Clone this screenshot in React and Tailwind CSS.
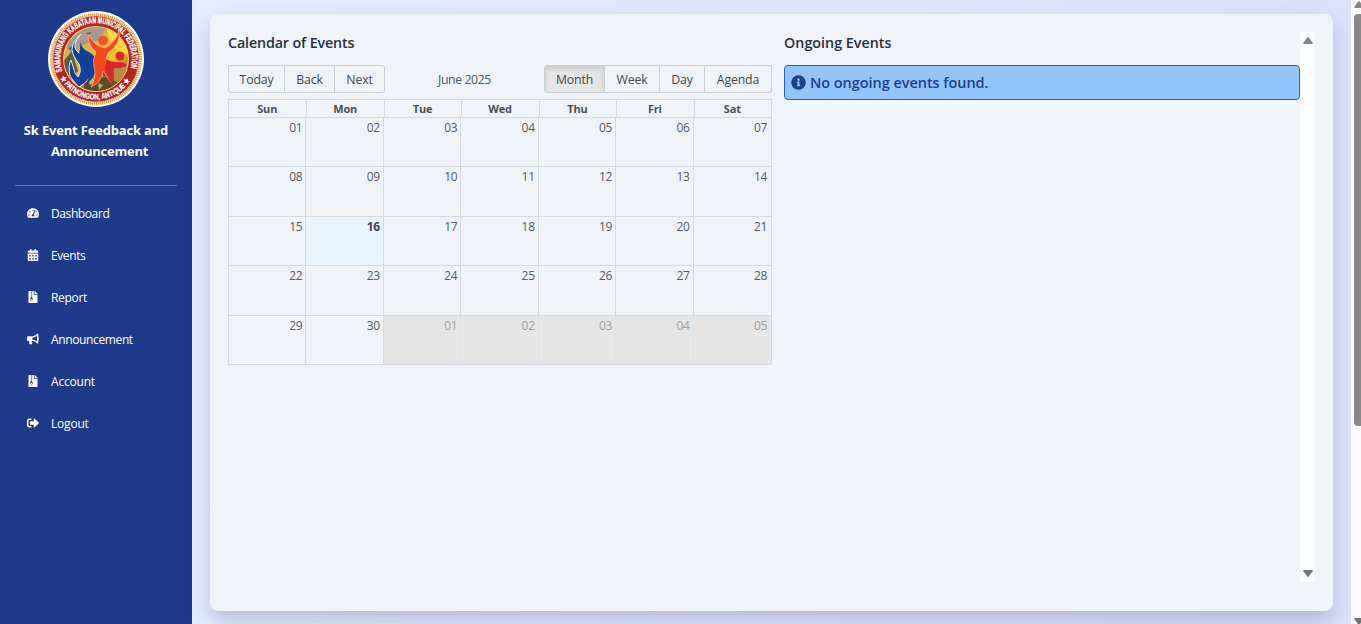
import React from "react";
import { FaTachometerAlt, FaFileArchive, FaBullhorn, FaSignOutAlt, FaInfoCircle } from "react-icons/fa";
import { FaCalendarDays } from "react-icons/fa6";

const nav = [
  { label: "Dashboard", Icon: FaTachometerAlt, track: "tracking-[-0.4px]" },
  { label: "Events", Icon: FaCalendarDays, track: "tracking-[-0.4px]" },
  { label: "Report", Icon: FaFileArchive, track: "tracking-[-0.3px]" },
  { label: "Announcement", Icon: FaBullhorn, track: "tracking-[-0.37px]" },
  { label: "Account", Icon: FaFileArchive, track: "tracking-[-0.2px]" },
  { label: "Logout", Icon: FaSignOutAlt, track: "tracking-[-0.2px]" },
];

const days = ["Sun", "Mon", "Tue", "Wed", "Thu", "Fri", "Sat"];
const pad = (n) => String(n).padStart(2, "0");
const weeks = [0, 1, 2, 3, 4].map((w) =>
  days.map((_, d) => {
    const n = w * 7 + d + 1;
    return { n: n > 30 ? n - 30 : n, off: n > 30, today: n === 16 };
  })
);

function Logo() {
  return (
    <svg viewBox="0 0 96 96" className="size-24">
      <defs>
        <path id="topArc" d="M 14.4 60.2 A 35.8 35.8 0 1 1 81.6 60.2" />
        <path id="bottomArc" d="M 12.4 67 A 40.3 40.3 0 0 0 83.6 67" />
        <linearGradient id="field" x1="0" y1="0" x2="0.5" y2="1">
          <stop offset="0" stopColor="#8e8378" />
          <stop offset="0.35" stopColor="#d9b24a" />
          <stop offset="0.7" stopColor="#f0c02a" />
          <stop offset="1" stopColor="#6b5428" />
        </linearGradient>
        <clipPath id="disc"><circle cx="48" cy="48" r="32" /></clipPath>
      </defs>
      <circle cx="48" cy="48" r="48" fill="#fffaf0" />
      <circle cx="48" cy="48" r="44.2" fill="none" stroke="#d9a04a" strokeWidth="3.4" strokeDasharray="1.3 0.7" />
      <circle cx="48" cy="48" r="42.8" fill="#b5261f" />
      <circle cx="48" cy="48" r="33" fill="#ffd98a" />
      <circle cx="48" cy="48" r="32" fill="url(#field)" />
      <g clipPath="url(#disc)">
        <path d="M18 34 Q34 14 58 17 L50 30 Q35 30 24 44Z" fill="#a79b8f" />
        <path d="M14 52 L24 40 L30 60 L22 70Z" fill="#5d5a48" />
        <path d="M36 68 L60 66 L66 80 L36 80Z" fill="#5f4a26" />
        <path d="M40 70 l4 -4 l4 5 l-6 3z M50 72 l5 2 l-4 5z" fill="#b6b06a" />
        <path d="M58 16 Q80 24 80 44 L64 36Z" fill="#ffd83d" />
        <path d="M20 38 l4 -3 l1 5z M38 22 l6 -1 l-4 4z" fill="#4f6670" />
        <circle cx="59" cy="61" r="5" fill="#7b3288" />
        <path d="M66 56 L80 56 L74 72 L66 70Z" fill="#b98b3a" />
      </g>
      <path d="M33 23 Q24 33 28 39 Q32 44 39 48 Q47 54 44 62 Q41 70 31 76 Q25 70 22 65 Q20 54 23 49 L27 62 L30 66 Q34 60 31 53 Q27 48 25 43 Q21 34 33 23Z" fill="#123f9c" stroke="#eef4ff" strokeWidth="0.9" />
      <path d="M33 28 Q31 37 41 41 Q50 46 49 56 Q47 66 38 74 Q43 64 41 56 Q38 49 31 45Z" fill="#123f9c" />
      <path d="M40 23 Q40 35 48 41 Q44 49 46 56 Q49 65 43 76 Q54 71 55 60 L63 72 Q66 61 58 54 Q57 46 61 41 Q73 33 71 20 Q67 32 57 37 Q46 35 40 23Z" fill="#f4481f" stroke="#ffd0a0" strokeWidth="0.6" />
      <circle cx="55" cy="29.5" r="4.8" fill="#f0532b" />
      <circle cx="72" cy="45" r="4.5" fill="#dc2a2c" />
      <path d="M58 48 Q64 52 70 51 Q76 51 79 54 Q74 58 66 57 Q66 66 63 73 L57 59Z" fill="#dc2430" />
      <text className="font-['Liberation_Sans'] font-bold" fontSize="8.6" fill="#fff" stroke="#fff" strokeWidth="0.3">
        <textPath href="#topArc" textLength="134" lengthAdjust="spacingAndGlyphs">SAMAHUNANG KABATAAN MUNICIPAL FEDERATION</textPath>
      </text>
      <text className="font-['Liberation_Sans'] font-bold" fontSize="7.8" fill="#fff" stroke="#fff" strokeWidth="0.2">
        <textPath href="#bottomArc" textLength="84" lengthAdjust="spacingAndGlyphs">★ PATNONGON, ANTIQUE ★</textPath>
      </text>
    </svg>
  );
}

function ToolButton({ children, className }) {
  return (
    <button className={"h-[28px] border-y border-r border-[#c9ced4] pt-[2px] text-center text-[12.3px] tracking-[-0.15px] text-[#43474b] first:rounded-l-[3px] first:border-l last:rounded-r-[3px] " + className}>
      {children}
    </button>
  );
}

export default function App() {
  return (
    <div className="flex h-[624px] w-[1361px] overflow-hidden whitespace-nowrap font-['Open_Sans','Noto_Sans',sans-serif]">
      <aside className="flex w-48 shrink-0 flex-col bg-[#1e3a8a] text-white">
        <div className="flex justify-center pt-[11px]"><Logo /></div>
        <h1 className="h-[55px] pt-[13px] text-center text-[13px] leading-[21px] font-bold">
          <span className="block tracking-[-0.18px]">Sk Event Feedback and</span>
          <span className="block pl-[7px] tracking-[-0.25px]">Announcement</span>
        </h1>
        <div className="mx-[15px] mt-[23px] h-px bg-[#3b82f6]" />
        <nav className="flex flex-col pt-[6px]">
          {nav.map(({ label, Icon, track }) => (
            <a key={label} className="flex h-[42px] items-center gap-3 pl-[27px]">
              <Icon className="size-3" />
              <span className={"pt-[2px] text-[12px] " + track}>{label}</span>
            </a>
          ))}
        </nav>
      </aside>

      <main className="flex-1 bg-linear-to-r from-[#e3edff] to-[#dde1fc] pt-[14px] pl-[18px]">
        <section className="flex h-[597px] w-[1123px] rounded-lg bg-[#f0f4f9] pt-[18px] pr-[18px] pl-[18px] shadow-[0_10px_20px_-1px_rgba(60,65,100,0.28)]">
          <div className="w-[544px]">
            <h2 className="h-[33px] text-[14.3px] leading-[22px] font-semibold tracking-[-0.14px] text-[#28303c]">Calendar of Events</h2>
            <div className="flex items-center justify-between">
              <div className="flex">
                <ToolButton className="w-[57px]">Today</ToolButton>
                <ToolButton className="w-[50px]">Back</ToolButton>
                <ToolButton className="w-[50px]">Next</ToolButton>
              </div>
              <span className="pt-[2px] text-[12.3px] tracking-[-0.4px] text-[#50555c]">June 2025</span>
              <div className="flex">
                <ToolButton className="w-[61px] border-[#adadad] bg-[#e6e6e6] shadow-[inset_0_3px_5px_rgba(0,0,0,0.125)]">Month</ToolButton>
                <ToolButton className="w-[55px]">Week</ToolButton>
                <ToolButton className="w-[45px]">Day</ToolButton>
                <ToolButton className="w-[67px]">Agenda</ToolButton>
              </div>
            </div>
            <div className="mt-[6px] border border-[#d5dae0]">
              <div className="grid h-[17px] grid-cols-7">
                {days.map((d) => (
                  <div key={d} className="border-l border-[#d5dae0] pr-px text-center text-[11px] leading-[18px] font-bold tracking-[-0.2px] text-[#4a4f56] first:border-l-0">{d}</div>
                ))}
              </div>
              {weeks.map((week, i) => (
                <div key={i} className="grid h-[49.4px] grid-cols-7 border-t border-[#d5dae0]">
                  {week.map(({ n, off, today }) => (
                    <div
                      key={n}
                      className={
                        "border-r pr-[3px] text-right text-[12px] leading-[20px] tracking-[-0.3px] last:border-r-0 last:pr-1 " +
                        (off ? "border-[#dfe1e4] bg-[#e6e6e6] text-[#a0a0a0]" : today ? "border-[#d5dae0] bg-[#e8f5ff] font-bold text-[#42474e]" : "border-[#d5dae0] text-[#555a62]")
                      }
                    >
                      {pad(n)}
                    </div>
                  ))}
                </div>
              ))}
            </div>
          </div>

          <div className="ml-3 flex h-[550px] w-[531px]">
            <div className="w-[516px]">
              <h2 className="h-[33px] text-[14.3px] leading-[22px] font-semibold tracking-[0.02px] text-[#28303c]">Ongoing Events</h2>
              <div className="flex h-[35px] items-center gap-1 rounded-[4px] border border-[#2563b8] bg-[#93c5fd] pl-[6px] text-[#1e3f8a]">
                <FaInfoCircle className="size-[15px]" />
                <span className="text-[14.5px] font-semibold tracking-[-0.05px]">No ongoing events found.</span>
              </div>
            </div>
            <div className="flex w-[15px] flex-col items-center justify-between bg-[#fcfdfe] py-[5px]">
              <svg viewBox="0 0 10 7" className="h-[7px] w-[10px]"><path d="M4.2.6 Q5-.2 5.8.6L9.7 5.8Q10 7 9 7H1Q0 7 .3 5.8Z" fill="#858585" /></svg>
              <svg viewBox="0 0 10 7" className="h-[7px] w-[10px]"><path d="M4.2 6.4Q5 7.2 5.8 6.4L9.7 1.2Q10 0 9 0H1Q0 0 .3 1.2Z" fill="#757575" /></svg>
            </div>
          </div>
        </section>
      </main>

      <div className="flex w-[10px] shrink-0 flex-col overflow-hidden bg-[#fcfcfe] pl-[3px]">
        <svg viewBox="0 0 10 7" className="mt-px h-[7px] w-[10px] shrink-0"><path d="M4.2.6Q5-.2 5.8.6L9.7 5.8Q10 7 9 7H1Q0 7 .3 5.8Z" fill="#858585" /></svg>
        <div className="mt-[6px] h-[412px] w-[10px] shrink-0 rounded-[4px] bg-[#888]" />
        <div className="flex-1" />
        <svg viewBox="0 0 10 7" className="-mb-px h-[7px] w-[10px] shrink-0"><path d="M4.2 6.4Q5 7.2 5.8 6.4L9.7 1.2Q10 0 9 0H1Q0 0 .3 1.2Z" fill="#757575" /></svg>
      </div>
    </div>
  );
}
